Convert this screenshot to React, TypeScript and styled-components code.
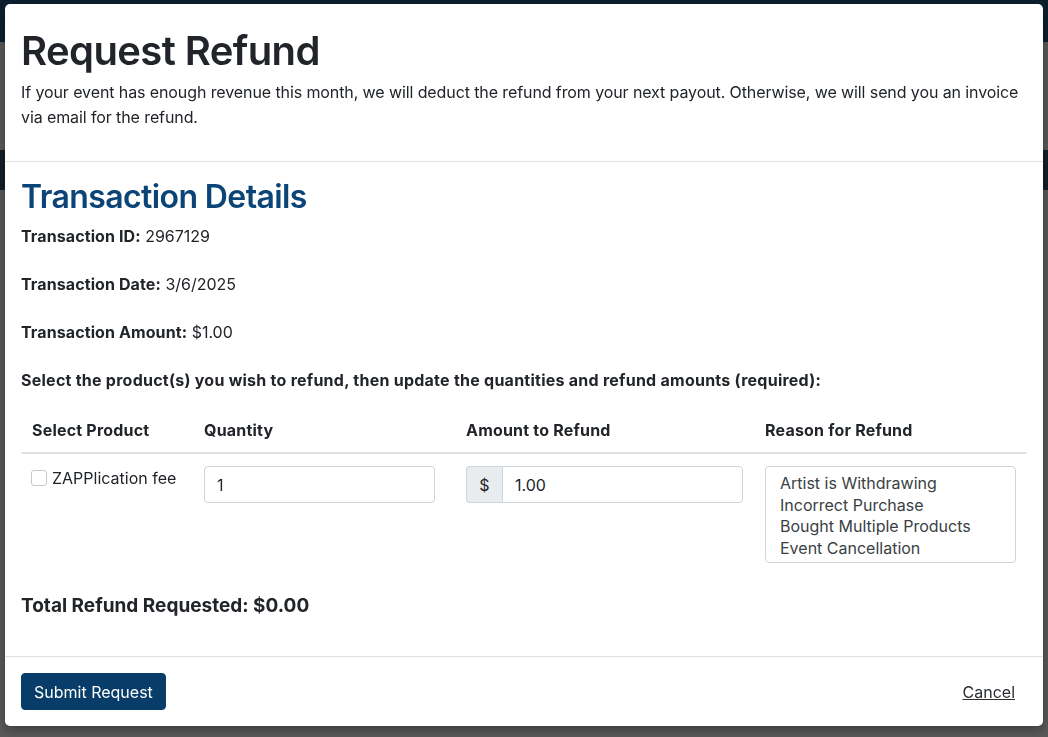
import styled, { createGlobalStyle } from 'styled-components';
import { useState } from 'react';

const GlobalStyle = createGlobalStyle`
  html, body {
    margin: 0;
    padding: 0;
  }
  body {
    font-family: Inter, "Liberation Sans", Arial, sans-serif;
    color: #212529;
    background: #b3b3b3;
    overflow: hidden;
  }
  * {
    box-sizing: border-box;
  }
`;

const reasons = [
  'Artist is Withdrawing',
  'Incorrect Purchase',
  'Bought Multiple Products',
  'Event Cancellation',
];

const App = () => {
  const [checked, setChecked] = useState(false);
  const [quantity, setQuantity] = useState('1');
  const [amount, setAmount] = useState('1.00');
  const [reason, setReason] = useState<string | null>(null);

  return (
    <>
      <GlobalStyle />
      <S.Page>
        <S.TopNav />
        <S.SubNav />
      </S.Page>
      <S.Overlay>
        <S.Modal>
          <S.Header>
            <S.Title>Request Refund</S.Title>
            <S.Intro>
              If your event has enough revenue this month, we will deduct the refund from your
              next payout. Otherwise, we will send you an invoice via email for the refund.
            </S.Intro>
          </S.Header>

          <S.Body>
            <S.SectionTitle>Transaction Details</S.SectionTitle>
            <S.Detail>
              <strong>Transaction ID:</strong> 2967129
            </S.Detail>
            <S.Detail>
              <strong>Transaction Date:</strong> 3/6/2025
            </S.Detail>
            <S.Detail>
              <strong>Transaction Amount:</strong> $1.00
            </S.Detail>
            <S.Instructions>
              Select the product(s) you wish to refund, then update the quantities and refund
              amounts (required):
            </S.Instructions>

            <S.Table>
              <S.HeadCell>Select Product</S.HeadCell>
              <S.HeadCell>Quantity</S.HeadCell>
              <S.HeadCell>Amount to Refund</S.HeadCell>
              <S.HeadCell>Reason for Refund</S.HeadCell>

              <S.Cell>
                <S.CheckLabel>
                  <S.Checkbox
                    type="checkbox"
                    checked={checked}
                    onChange={(e) => setChecked(e.target.checked)}
                  />
                  ZAPPlication fee
                </S.CheckLabel>
              </S.Cell>
              <S.Cell>
                <S.Input
                  $width="231px"
                  value={quantity}
                  onChange={(e) => setQuantity(e.target.value)}
                />
              </S.Cell>
              <S.Cell>
                <S.InputGroup>
                  <S.Addon>$</S.Addon>
                  <S.Input
                    $grouped
                    value={amount}
                    onChange={(e) => setAmount(e.target.value)}
                  />
                </S.InputGroup>
              </S.Cell>
              <S.Cell>
                <S.ListBox role="listbox" aria-multiselectable="true">
                  {reasons.map((r) => (
                    <S.Option
                      key={r}
                      role="option"
                      aria-selected={reason === r}
                      $selected={reason === r}
                      onClick={() => setReason(reason === r ? null : r)}
                    >
                      {r}
                    </S.Option>
                  ))}
                </S.ListBox>
              </S.Cell>
            </S.Table>

            <S.Total>Total Refund Requested: $0.00</S.Total>
          </S.Body>

          <S.Footer>
            <S.PrimaryButton type="button">Submit Request</S.PrimaryButton>
            <S.LinkButton type="button">Cancel</S.LinkButton>
          </S.Footer>
        </S.Modal>
      </S.Overlay>
    </>
  );
};

const S = {
  Page: styled.div`
    height: 737px;
    display: flex;
    flex-direction: column;
  `,
  TopNav: styled.div`
    height: 42px;
    background: #1a3e5e;
  `,
  SubNav: styled.div`
    margin-top: 108px;
    height: 40px;
    background: #283e52;
  `,
  Overlay: styled.div`
    position: fixed;
    inset: 0;
    background: rgba(0, 0, 0, 0.5);
    display: flex;
    justify-content: center;
    align-items: flex-start;
    padding-top: 4px;
  `,
  Modal: styled.div`
    width: 1038px;
    height: 722px;
    background: #fff;
    border-radius: 5px;
    box-shadow: 0 4px 12px rgba(0, 0, 0, 0.35);
    display: flex;
    flex-direction: column;
    overflow: hidden;
  `,
  Header: styled.div`
    padding: 23px 16px 15px;
    border-bottom: 1px solid #dee2e6;
  `,
  Title: styled.h1`
    margin: 0 0 5px;
    font-size: 40px;
    font-weight: 600;
    line-height: 1.2;
    letter-spacing: -0.6px;
  `,
  Intro: styled.p`
    margin: 0 0 16px;
    font-size: 16px;
    line-height: 25px;
    letter-spacing: -0.1px;
  `,
  Body: styled.div`
    flex: 1;
    padding: 16px 16px 0;
  `,
  SectionTitle: styled.h2`
    margin: 0 0 8px;
    font-size: 32px;
    font-weight: 600;
    line-height: 1.2;
    letter-spacing: -0.6px;
    color: #0b4577;
  `,
  Detail: styled.p`
    margin: 0 0 24px;
    font-size: 16px;
    line-height: 24px;

    strong {
      font-weight: 700;
      letter-spacing: 0.1px;
    }
  `,
  Instructions: styled.p`
    margin: 0 0 15px;
    font-size: 16px;
    font-weight: 700;
    line-height: 24px;
    letter-spacing: 0.25px;
  `,
  Table: styled.div`
    display: grid;
    grid-template-columns: 172px 262px 299px 273px;
  `,
  HeadCell: styled.div`
    padding: 11px 11px 10px;
    font-size: 16px;
    font-weight: 700;
    line-height: 24px;
    letter-spacing: 0.2px;
    border-bottom: 2px solid #dee2e6;
  `,
  Cell: styled.div`
    padding: 12px 11px 12px;
    font-size: 16px;
    line-height: 24px;
  `,
  CheckLabel: styled.label`
    display: flex;
    align-items: flex-start;
    gap: 5px;
    margin-left: -1px;
  `,
  Checkbox: styled.input`
    appearance: none;
    width: 16px;
    height: 16px;
    margin: 4px 0 0;
    border: 1px solid #c4c9ce;
    border-radius: 3px;
    background: #fff;
    flex-shrink: 0;
    cursor: pointer;

    &:checked {
      background: #073d68;
      border-color: #073d68;
    }
  `,
  Input: styled.input<{ $width?: string; $grouped?: boolean }>`
    display: block;
    width: ${(p) => p.$width ?? '100%'};
    height: 37px;
    padding: 6px 12px;
    font: inherit;
    font-size: 16px;
    color: #212529;
    background: #fff;
    border: 1px solid #ced4da;
    border-radius: ${(p) => (p.$grouped ? '0 4px 4px 0' : '4px')};
    outline: none;
    flex: ${(p) => (p.$grouped ? 1 : 'none')};
    min-width: 0;
  `,
  InputGroup: styled.div`
    display: flex;
    width: 100%;
  `,
  Addon: styled.span`
    display: flex;
    align-items: center;
    justify-content: center;
    width: 36px;
    height: 37px;
    font-size: 16px;
    color: #212529;
    background: #e9ecef;
    border: 1px solid #ced4da;
    border-right: none;
    border-radius: 4px 0 0 4px;
  `,
  ListBox: styled.div`
    height: 97px;
    padding: 6px 14px;
    border: 1px solid #ced4da;
    border-radius: 4px;
    background: #fff;
    overflow: hidden;
  `,
  Option: styled.div<{ $selected?: boolean }>`
    font-size: 16px;
    line-height: 21.5px;
    color: #3a3f44;
    color: ${(p) => (p.$selected ? '#fff' : '#3a3f44')};
    background: ${(p) => (p.$selected ? '#0b4577' : 'transparent')};
    cursor: default;
    white-space: nowrap;
  `,
  Total: styled.h5`
    margin: 19px 0 0;
    font-size: 19px;
    font-weight: 700;
    line-height: 24px;
  `,
  Footer: styled.div`
    display: flex;
    align-items: center;
    justify-content: space-between;
    padding: 16px 16px 16px;
    border-top: 1px solid #dee2e6;
  `,
  PrimaryButton: styled.button`
    height: 37px;
    padding: 6px 12px;
    font: inherit;
    font-size: 16px;
    color: #fff;
    background: #073d68;
    border: 1px solid #073d68;
    border-radius: 4px;
    cursor: pointer;
  `,
  LinkButton: styled.button`
    padding: 6px 12px;
    font: inherit;
    font-size: 16px;
    color: #2a2e33;
    background: none;
    border: none;
    text-decoration: underline;
    cursor: pointer;
  `,
};

export default App;
